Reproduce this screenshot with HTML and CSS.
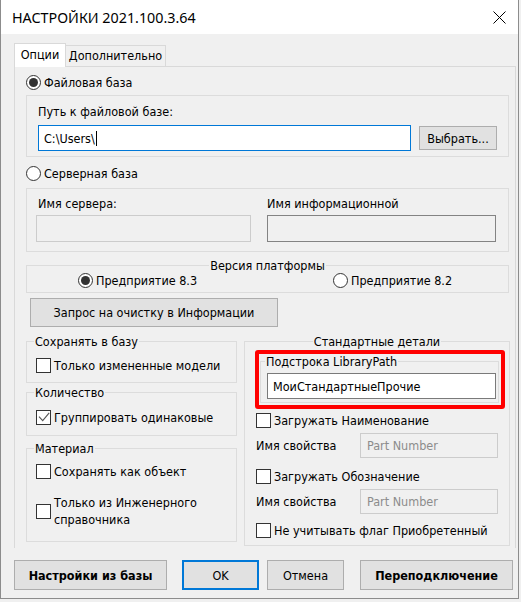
FILE: index.html
```html
<!DOCTYPE html>
<html lang="ru">

  <head>
    <meta charset="UTF-8">
    <meta name="viewport" content="width=device-width, initial-scale=1.0">
    <title>Настройки</title>
    <link rel="stylesheet" href="styles.css">
  </head>

  <body>
    <div class="window">
      <div class="titlebar">
        <span class="title">НАСТРОЙКИ 2021.100.3.64</span>
        <svg class="close" width="13" height="13" viewBox="0 0 13 13">
          <path d="M0.5 0.5 L12.5 12.5 M12.5 0.5 L0.5 12.5" stroke="#000" stroke-width="1" fill="none" />
        </svg>
      </div>

      <div class="main">
        <div class="tabs">
          <div class="tab active">Опции</div>
          <div class="tab">Дополнительно</div>
        </div>

        <div class="panel">
          <div class="radio-row"><span class="radio-mark on"></span>Файловая база</div>
          <div class="box box-path">
            <div class="label">Путь к файловой базе:</div>
            <div class="path-row">
              <div class="input focus">C:\Users\<span class="caret"></span></div>
              <button class="btn browse">Выбрать...</button>
            </div>
          </div>

          <div class="radio-row server-radio"><span class="radio-mark"></span>Серверная база</div>
          <div class="box box-server">
            <div class="col col-server">
              <div class="label">Имя сервера:</div>
              <div class="input disabled"></div>
            </div>
            <div class="col col-base">
              <div class="label">Имя информационной</div>
              <div class="input disabled dark"></div>
            </div>
          </div>

          <fieldset class="group platform">
            <legend>Версия платформы</legend>
            <div class="platform-opts">
              <div class="radio-row"><span class="radio-mark on"></span>Предприятие 8.3</div>
              <div class="radio-row"><span class="radio-mark"></span>Предприятие 8.2</div>
            </div>
          </fieldset>

          <button class="btn clear">Запрос на очистку в Информации</button>

          <div class="columns">
            <div class="left">
              <fieldset class="group fs-save">
                <legend>Сохранять в базу</legend>
                <div class="check-row"><span class="check"></span>Только измененные модели</div>
              </fieldset>
              <fieldset class="group fs-count">
                <legend>Количество</legend>
                <div class="check-row">
                  <span class="check">
                    <svg width="13" height="13" viewBox="0 0 13 13">
                      <path d="M2 5.7 L5.7 9.6 L12.2 1.8" stroke="#555" stroke-width="1.1" fill="none" />
                    </svg>
                  </span>Группировать одинаковые
                </div>
              </fieldset>
              <fieldset class="group fs-material">
                <legend>Материал</legend>
                <div class="check-row row-object"><span class="check"></span>Сохранять как объект</div>
                <div class="check-row row-ref"><span class="check"></span><span>Только из Инженерного<br>справочника</span></div>
              </fieldset>
            </div>

            <fieldset class="group std">
              <legend>Стандартные детали</legend>
              <div class="highlight">
                <fieldset class="group lib">
                  <legend>Подстрока LibraryPath</legend>
                  <div class="input lib-input">МоиСтандартныеПрочие</div>
                </fieldset>
              </div>
              <div class="check-row row-name"><span class="check"></span>Загружать Наименование</div>
              <div class="prop-row">
                <span class="prop-label">Имя свойства</span>
                <div class="input prop">Part Number</div>
              </div>
              <div class="check-row row-desig"><span class="check"></span>Загружать Обозначение</div>
              <div class="prop-row">
                <span class="prop-label">Имя свойства</span>
                <div class="input prop">Part Number</div>
              </div>
              <div class="check-row row-flag"><span class="check"></span>Не учитывать флаг Приобретенный</div>
            </fieldset>
          </div>
        </div>

        <div class="footer">
          <button class="btn fbtn wide bold">Настройки из базы</button>
          <button class="btn fbtn small ok">OK</button>
          <button class="btn fbtn small cancel">Отмена</button>
          <button class="btn fbtn wide bold reconnect">Переподключение</button>
        </div>
      </div>
    </div>
  </body>

</html>
```

FILE: styles.css
```css
html {
  font-family: "DejaVu Sans Condensed", "Liberation Sans", Arial, sans-serif;
  /* dialog font, close to Tahoma at 125% */
}

body {
  margin: 0;
  background: #f0f0f0;
  font-size: 12.5px;
  color: #000;
}

.window {
  width: 519px;
  height: 599px;
  box-sizing: border-box;
  border: 1px solid #8c8c8c;
  border-top: none;
  background: #f0f0f0;
}

.titlebar {
  height: 34px;
  background: #fff;
  display: flex;
  align-items: center;
  padding-left: 11px;
  font-family: "Noto Sans", sans-serif;
  font-size: 14.3px;
}

.close {
  margin-left: auto;
  margin-right: 12px;
}

.main {
  padding: 9px 2px 0 13px;
}

/* tabs */
.tabs {
  display: flex;
  align-items: flex-end;
  height: 23px;
  position: relative;
  z-index: 1;
}

.tab {
  box-sizing: border-box;
  border: 1px solid #d9d9d9;
  border-bottom: none;
  text-align: center;
  width: 101px;
  height: 21px;
  margin-left: -1px;
  line-height: 20px;
}

.tab.active {
  width: 52px;
  height: 24px;
  margin-left: 0;
  margin-bottom: -1px;
  background: #fff;
  line-height: 21px;
}

.panel {
  box-sizing: border-box;
  height: 482px;
  border: 1px solid #d9d9d9;
  border-bottom: none;
  padding: 7px 6px 0 11px;
}

/* radios and checks */
.radio-row,
.check-row {
  display: flex;
  align-items: center;
  gap: 3px;
  min-height: 17px;
  line-height: 17px;
  white-space: nowrap;
}

.radio-mark {
  width: 15px;
  height: 15px;
  box-sizing: border-box;
  border: 1px solid #333;
  border-radius: 50%;
  background: #fff;
  display: flex;
  align-items: center;
  justify-content: center;
  flex: none;
}

.radio-mark.on::after {
  content: "";
  width: 9px;
  height: 9px;
  border-radius: 50%;
  background: #333;
}

.check {
  width: 15px;
  height: 15px;
  box-sizing: border-box;
  border: 1px solid #333;
  background: #fff;
  flex: none;
}

.check svg {
  display: block;
}

/* plain boxes */
.box {
  border: 1px solid #dcdcdc;
}

.label {
  line-height: 16px;
}

.box-path {
  margin-top: 4px;
  padding: 8px 11px 5px;
}

.path-row {
  display: flex;
  align-items: center;
  gap: 8px;
  margin-top: 5px;
}

.input {
  box-sizing: border-box;
  height: 26px;
  border: 1px solid #7a7a7a;
  background: #fff;
  padding-left: 5px;
  display: flex;
  align-items: center;
  white-space: nowrap;
}

.input.focus {
  width: 373px;
  border-color: #0078d7;
}

.caret {
  display: inline-block;
  width: 1px;
  height: 15px;
  background: #000;
  margin-left: 1px;
}

.btn {
  font: inherit;
  color: #000;
  box-sizing: border-box;
  border: 1px solid #adadad;
  background: #e1e1e1;
  padding: 0;
}

.browse {
  width: 78px;
  height: 24px;
}

.server-radio {
  margin-top: 8px;
}

.box-server {
  margin-top: 6px;
  padding: 7px 12px 9px 9px;
  display: flex;
  gap: 16px;
}

.col-server {
  width: 215px;
}

.col-server .label {
  margin-left: 2px;
}

.col-base {
  width: 229px;
}

.input.disabled {
  height: 27px;
  margin-top: 3px;
  background: #f0f0f0;
  border-color: #cccccc;
}

.input.disabled.dark {
  border-color: #838383;
}

/* group boxes */
.group {
  box-sizing: border-box;
  margin: 0;
  min-width: 0;
  border: 1px solid #dcdcdc;
  padding: 0 9px;
}

.group legend {
  padding: 0 1px;
  margin-left: -2px;
  line-height: 15px;
}

.platform {
  margin-top: 6px;
  padding: 0;
}

.platform legend {
  margin: 0 auto;
}

.platform-opts {
  display: grid;
  grid-template-columns: 255px 1fr;
  padding: 0 0 3px 51px;
  margin-top: -1px;
}

.clear {
  display: block;
  margin: 5px 0 0 4px;
  width: 248px;
  height: 29px;
}

.columns {
  display: flex;
  align-items: flex-start;
  gap: 7px;
  margin-top: 7px;
}

.left {
  width: 211px;
  flex: none;
}

.fs-save {
  padding-bottom: 8px;
}

.fs-save .check-row {
  margin-top: 8px;
}

.fs-count {
  margin-top: 2px;
  padding-bottom: 9px;
}

.fs-count .check-row {
  margin-top: 9px;
}

.fs-material {
  margin-top: 5px;
  padding-bottom: 13px;
}

.row-object {
  margin-top: 7px;
}

.row-ref {
  margin-top: 14px;
}

.std {
  width: 266px;
  flex: none;
  margin-right: -1px;
  padding: 0 11px 6px;
}

.std > legend {
  margin: 0 auto;
}

.highlight {
  margin: 1px -7px 0 -1px;
  border: 4px solid #ff0000;
  border-radius: 3px;
}

.lib {
  margin: 0 2px 2px 1px;
  padding: 0 2px 3px 6px;
}

.lib-input {
  margin-top: 4px;
}

.row-name {
  margin-top: 3px;
}

.prop-row {
  display: flex;
  align-items: center;
  margin-top: 4px;
}

.prop-label {
  width: 104px;
  flex: none;
}

.input.prop {
  width: 138px;
  height: 25px;
  background: #f0f0f0;
  border-color: #cccccc;
  color: #8c8c8c;
  padding-left: 6px;
}

.row-desig {
  margin-top: 10px;
}

.row-flag {
  margin-top: 8px;
}

/* bottom buttons */
.footer {
  display: flex;
  margin-top: 12px;
}

.fbtn {
  height: 30px;
}

.wide {
  width: 153px;
}

.small {
  width: 77px;
}

.bold {
  font-weight: bold;
}

.ok {
  margin-left: 15px;
  border: 2px solid #0078d7;
}

.cancel {
  margin-left: 8px;
}

.reconnect {
  margin-left: 16px;
}
```
